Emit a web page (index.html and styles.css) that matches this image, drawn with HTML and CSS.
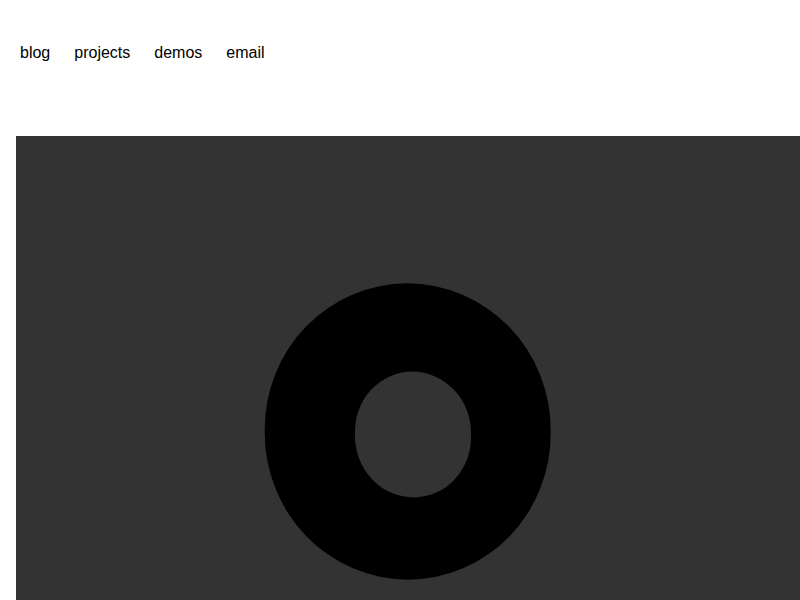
FILE: index.html
```html
<!DOCTYPE html>
<html>
<head>
<meta charset="utf-8">
<link rel="stylesheet" href="styles.css">
</head>
<body>
<nav class="nav">
  <a class="nav-link" href="#">blog</a>
  <a class="nav-link" href="#">projects</a>
  <a class="nav-link" href="#">demos</a>
  <a class="nav-link" href="#">email</a>
</nav>
<main class="stage">
  <svg class="scene" width="800" height="480" viewBox="16 136 800 480" xmlns="http://www.w3.org/2000/svg">
    <path fill="#000" fill-rule="evenodd" d="
      M 264.7 431.5 A 143 146.5 -3 1 0 550.7 431.5 A 143 146.5 -3 1 0 264.7 431.5 Z
      M 355 434.5 A 58 61 -6 1 0 471 434.5 A 58 61 -6 1 0 355 434.5 Z"/>
  </svg>
</main>
</body>
</html>
```

FILE: styles.css
```css
html, body {
  margin: 0;
  padding: 0;
  background: #fff;
  overflow: hidden;
}
.nav {
  display: flex;
  gap: 16px;
  padding: 44px 16px 0;
  height: 136px;
  box-sizing: border-box;
  font-family: "Liberation Sans", Arial, sans-serif;
  font-size: 16px;
  line-height: 18px;
}
.nav-link {
  color: #000;
  text-decoration: none;
  padding: 0 4px;
}
.stage {
  margin-left: 16px;
  width: 800px;
  height: 480px;
  background: #333;
}
.scene {
  display: block;
}
```
